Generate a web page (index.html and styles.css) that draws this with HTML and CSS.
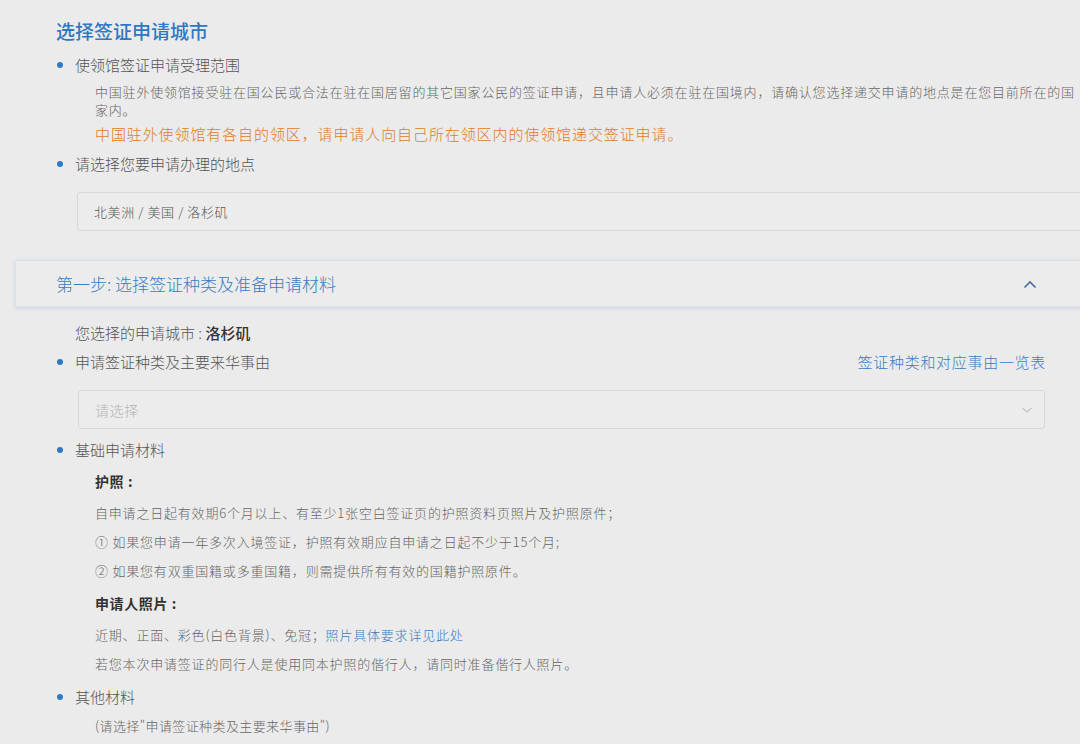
FILE: index.html
```html
<!DOCTYPE html>
<html lang="zh-CN">
<head>
<meta charset="utf-8">
<title>选择签证申请城市</title>
<link rel="stylesheet" href="styles.css">
</head>
<body>
<div class="page">
  <section class="city">
    <h2 class="title">选择签证申请城市</h2>
    <div class="bullet b1"><span class="dot"></span><span>使领馆签证申请受理范围</span></div>
    <p class="note">中国驻外使领馆接受驻在国公民或合法在驻在国居留的其它国家公民的签证申请，且申请人必须在驻在国境内，请确认您选择递交申请的地点是在您目前所在的国家内。</p>
    <p class="warn">中国驻外使领馆有各自的领区，请申请人向自己所在领区内的使领馆递交签证申请。</p>
    <div class="bullet b2"><span class="dot"></span><span>请选择您要申请办理的地点</span></div>
    <div class="select select-wide"><span class="value">北美洲 / 美国 / 洛杉矶</span></div>
  </section>

  <section class="panel">
    <div class="panel-head">
      <span class="panel-title">第一步: 选择签证种类及准备申请材料</span>
      <svg class="chev-up" width="14" height="9" viewBox="0 0 14 9"><polyline points="1.5,7.5 7,2 12.5,7.5" fill="none" stroke="#4a6da6" stroke-width="1.7"/></svg>
    </div>
    <div class="panel-body">
      <div class="chosen">您选择的申请城市 : <b>洛杉矶</b></div>
      <div class="bullet b3">
        <span class="dot"></span><span>申请签证种类及主要来华事由</span>
        <a class="link-right">签证种类和对应事由一览表</a>
      </div>
      <div class="select select-type">
        <span class="placeholder">请选择</span>
        <svg class="chev-down" width="12" height="8" viewBox="0 0 12 8"><polyline points="1.5,2 6,6 10.5,2" fill="none" stroke="#c4c4c4" stroke-width="1.2"/></svg>
      </div>
      <div class="bullet b4"><span class="dot"></span><span>基础申请材料</span></div>
      <div class="sub sub-first">护照 :</div>
      <div class="line l1">自申请之日起有效期6个月以上、有至少1张空白签证页的护照资料页照片及护照原件；</div>
      <div class="line">① 如果您申请一年多次入境签证，护照有效期应自申请之日起不少于15个月;</div>
      <div class="line">② 如果您有双重国籍或多重国籍，则需提供所有有效的国籍护照原件。</div>
      <div class="sub">申请人照片 :</div>
      <div class="line l1">近期、正面、彩色(白色背景)、免冠；<a class="link">照片具体要求详见此处</a></div>
      <div class="line">若您本次申请签证的同行人是使用同本护照的偕行人，请同时准备偕行人照片。</div>
      <div class="bullet b5"><span class="dot"></span><span>其他材料</span></div>
      <div class="line l-last">(请选择"申请签证种类及主要来华事由")</div>
    </div>
  </section>
</div>
</body>
</html>
```

FILE: styles.css
```css
html, body {
  margin: 0;
  padding: 0;
}
body {
  background: #ebebeb;
  font-family: "Noto Sans CJK SC", "Noto Sans", "Liberation Sans", sans-serif;
  font-weight: 300;
  color: #555;
  overflow: hidden;
}
.page {
  width: 1080px;
  height: 744px;
  overflow: hidden;
}
.city {
  padding: 18px 0 0 56px;
}
.title {
  margin: 0;
  font-size: 19px;
  line-height: 26px;
  font-weight: 500;
  color: #2f78c2;
}
.bullet {
  display: flex;
  align-items: center;
  font-size: 15px;
  line-height: 22px;
  color: #555;
}
.dot {
  width: 6px;
  height: 6px;
  border-radius: 50%;
  background: #2f78c2;
  margin: 0 12px 0 1px;
  flex: none;
}
.b1 { margin-top: 10px; }
.note {
  margin: 7px 0 0 39px;
  width: 985px;
  font-size: 13px;
  line-height: 18px;
  letter-spacing: 0.8px;
  color: #666;
}
.warn {
  margin: 4px 0 0 39px;
  font-size: 15px;
  line-height: 22px;
  letter-spacing: 0.9px;
  color: #e07b25;
}
.b2 { margin-top: 8px; }
.select {
  box-sizing: border-box;
  height: 39px;
  border: 1px solid #d7d7d7;
  border-radius: 3px;
  background: #ececec;
  display: flex;
  align-items: center;
  padding-left: 16px;
  font-size: 13px;
  letter-spacing: 0.6px;
}
.select-wide {
  margin: 17px -40px 0 21px;
}
.value { color: #555; }
.panel {
  margin: 29px -40px 0 15px;
}
.panel-head {
  box-sizing: border-box;
  height: 47px;
  display: flex;
  align-items: center;
  padding-left: 40px;
  background: #ececec;
  border: 1px solid #dde3ea;
  border-top-color: #d6e0ec;
  box-shadow: 0 1px 4px rgba(80, 130, 190, 0.22);
  position: relative;
}
.panel-title {
  font-size: 17px;
  line-height: 24px;
  color: #3a7cc2;
}
.chev-up {
  position: absolute;
  left: 1007px;
  top: 19px;
}
.panel-body {
  width: 990px;
  padding-left: 41px;
}
.chosen {
  margin: 15px 0 0 19px;
  font-size: 15px;
  line-height: 22px;
  color: #555;
}
.chosen b {
  font-weight: 500;
  color: #333;
}
.b3 {
  margin-top: 7px;
}
.link-right {
  margin-left: auto;
  color: #3a7cc2;
  letter-spacing: 0.7px;
}
.select-type {
  margin: 17px 0 0 22px;
  width: 967px;
  position: relative;
}
.placeholder {
  color: #b3b3b3;
  font-size: 14px;
}
.chev-down {
  position: absolute;
  right: 11px;
  top: 15px;
}
.b4 { margin-top: 10px; }
.sub {
  margin: 11px 0 0 39px;
  font-size: 14px;
  line-height: 22px;
  font-weight: 700;
  letter-spacing: 0.6px;
  color: #333;
}
.sub-first { margin-top: 9px; }
.line {
  margin: 9px 0 0 39px;
  font-size: 13px;
  line-height: 20px;
  letter-spacing: 0.8px;
  color: #666;
}
.line.l1 { margin-top: 11px; }
.link {
  color: #3a7cc2;
}
.b5 { margin-top: 12px; }
.line.l-last { margin-top: 8px; letter-spacing: 0.4px; }
```
